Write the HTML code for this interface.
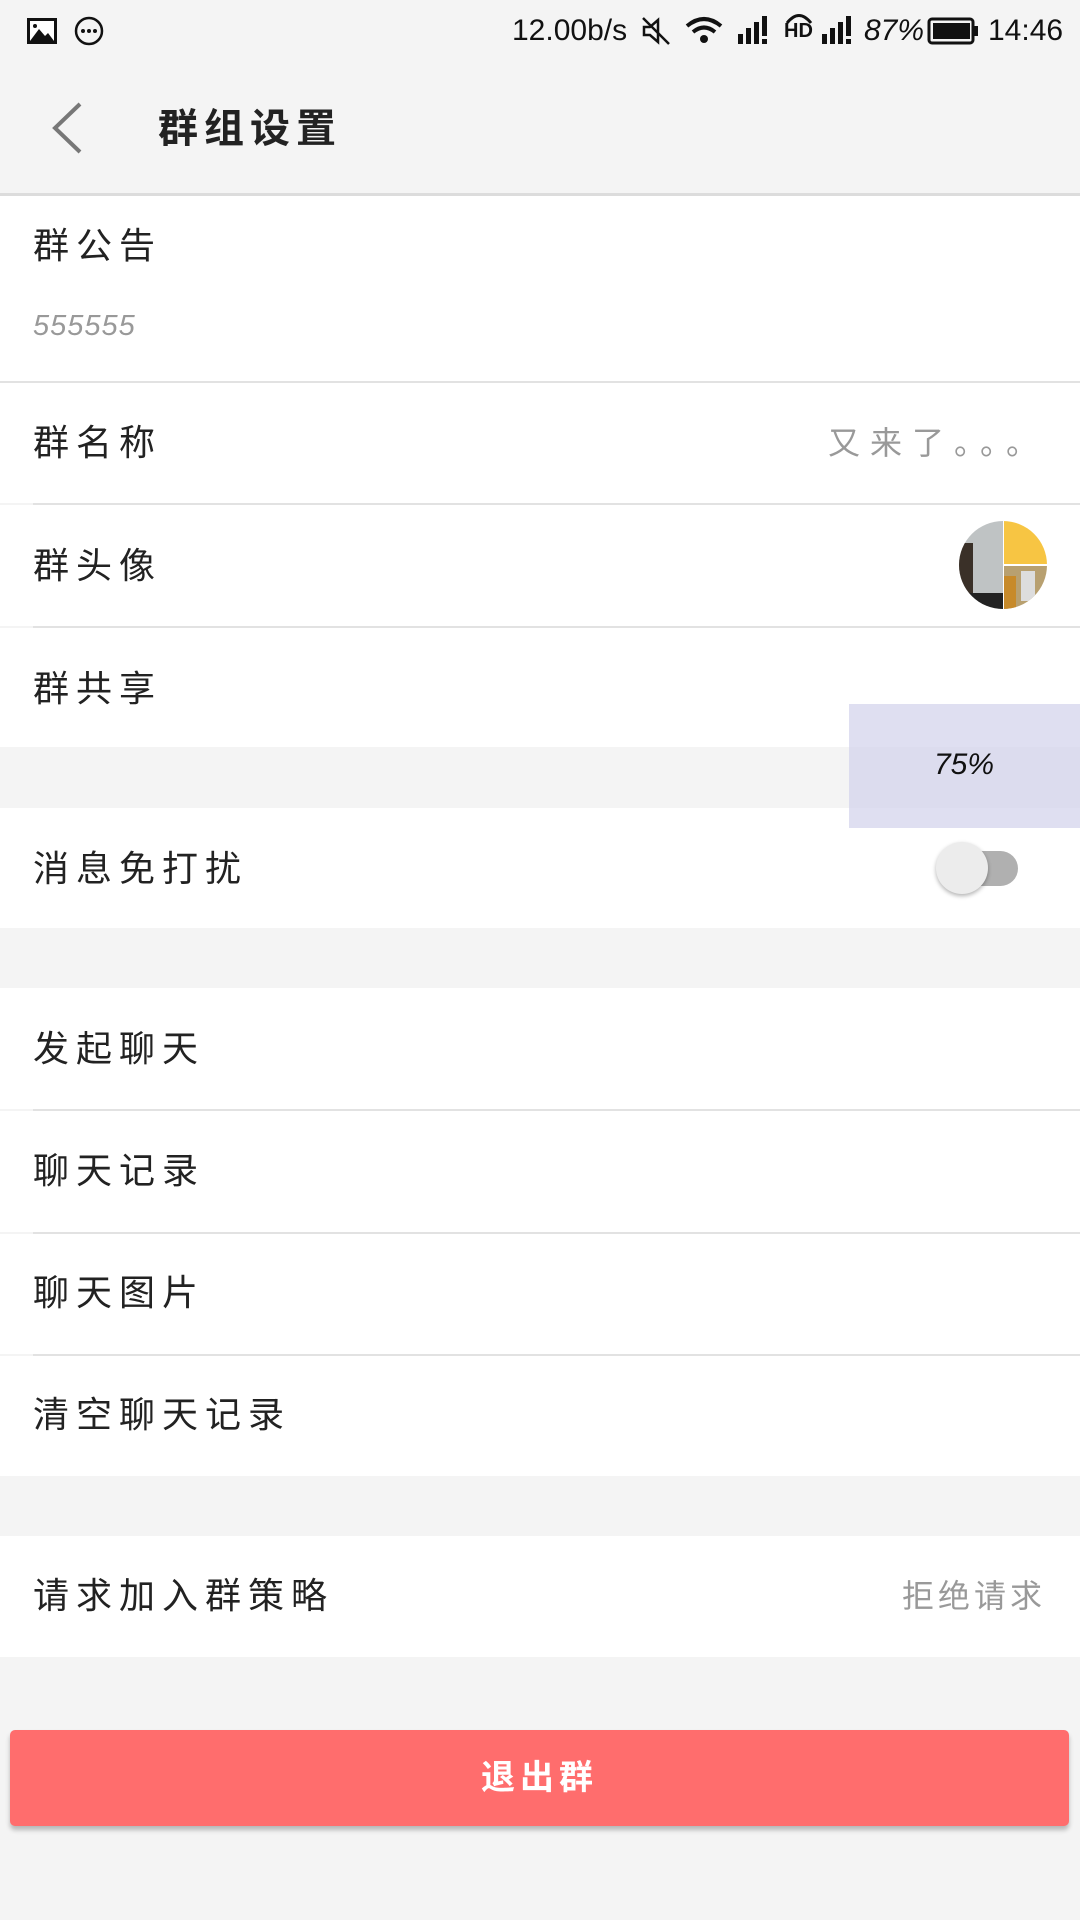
<!DOCTYPE html>
<html><head><meta charset="utf-8"><style>
*{margin:0;padding:0;box-sizing:border-box}
body{width:1080px;height:1920px;background:#f4f4f4;position:relative;overflow:hidden;font-family:"Liberation Sans","Noto Sans CJK SC",sans-serif;color:#222}
.a{position:absolute}
.row{position:absolute;left:0;width:1080px;background:#fff}
.t{position:absolute;left:33px;font-size:36px;letter-spacing:7px;line-height:40px}
.line{position:absolute;left:33px;right:0;height:2px;background:#e2e2e2}
.g{color:#999}
</style></head><body>
<div class="a" style="left:0;top:0;width:1080px;height:61px;background:#f4f4f4"></div>
<svg class="a" style="left:26px;top:17px" width="32" height="28" viewBox="0 0 32 28"><rect x="1" y="1" width="30" height="26" fill="#111"/><rect x="4" y="4" width="24" height="20" fill="#fff"/><path d="M4 24 L13 12 L19 19 L22 16 L28 24Z" fill="#111"/><circle cx="9" cy="9" r="2" fill="#111"/></svg>
<svg class="a" style="left:74px;top:16px" width="30" height="30"><circle cx="15" cy="15" r="13" fill="none" stroke="#111" stroke-width="2.5"/><circle cx="9" cy="15" r="2" fill="#111"/><circle cx="15" cy="15" r="2" fill="#111"/><circle cx="21" cy="15" r="2" fill="#111"/></svg>
<div class="a" style="left:512px;top:13px;font-size:30px;color:#111;line-height:36px">12.00b/s</div>
<svg class="a" style="left:640px;top:15px" width="32" height="32"><path d="M4 12h6l8-7v22l-8-7H4z" fill="none" stroke="#111" stroke-width="2.5"/><path d="M3 3 L29 29" stroke="#111" stroke-width="2.5"/></svg>
<svg class="a" style="left:684px;top:15px" width="40" height="32"><path d="M3 11 Q20 -3 37 11" fill="none" stroke="#111" stroke-width="4"/><path d="M9 17 Q20 8 31 17" fill="none" stroke="#111" stroke-width="4"/><circle cx="20" cy="24" r="4" fill="#111"/></svg>
<svg class="a" style="left:738px;top:16px" width="32" height="30"><rect x="0" y="18" width="5" height="10" fill="#111"/><rect x="8" y="12" width="5" height="16" fill="#111"/><rect x="16" y="6" width="5" height="22" fill="#111"/><rect x="24" y="0" width="5" height="20" fill="#111"/><rect x="24" y="23" width="5" height="5" fill="#111"/></svg>
<div class="a" style="left:784px;top:20px;font-size:20px;font-weight:bold;color:#111">HD</div>
<svg class="a" style="left:784px;top:12px" width="30" height="12"><path d="M3 11 Q15 -4 27 11" fill="none" stroke="#111" stroke-width="3"/></svg>
<svg class="a" style="left:822px;top:16px" width="32" height="30"><rect x="0" y="18" width="5" height="10" fill="#111"/><rect x="8" y="12" width="5" height="16" fill="#111"/><rect x="16" y="6" width="5" height="22" fill="#111"/><rect x="24" y="0" width="5" height="20" fill="#111"/><rect x="24" y="23" width="5" height="5" fill="#111"/></svg>
<div class="a" style="left:864px;top:13px;font-size:30px;color:#111;line-height:36px;font-style:italic">87%</div>
<svg class="a" style="left:927px;top:17px" width="52" height="28"><rect x="2" y="2" width="44" height="24" rx="3" fill="none" stroke="#111" stroke-width="3"/><rect x="6" y="6" width="37" height="16" fill="#111"/><rect x="47" y="9" width="4" height="10" fill="#111"/></svg>
<div class="a" style="left:988px;top:13px;font-size:30px;color:#111;line-height:36px">14:46</div>
<svg class="a" style="left:50px;top:102px" width="34" height="52"><path d="M30 2 L5 26 L30 50" fill="none" stroke="#777" stroke-width="4"/></svg>
<div class="a" style="left:158px;top:106px;font-size:40px;font-weight:bold;letter-spacing:6px;line-height:46px">群组设置</div>
<div class="a" style="left:0;top:193px;width:1080px;height:3px;background:#dcdcdc"></div>

<div class="row" style="top:196px;height:186px"><div class="t" style="top:30px">群公告</div><div class="a g" style="left:33px;top:114px;font-size:29px;font-style:italic;letter-spacing:1px">555555</div></div>
<div class="line" style="top:381px;left:0"></div>
<div class="row" style="top:383px;height:120px"><div class="t" style="top:40px">群名称</div><div class="a g" style="left:828px;top:35px;font-size:32px;letter-spacing:10px">又来了。。。</div></div>
<div class="line" style="top:503px"></div>
<div class="row" style="top:505px;height:121px"><div class="t" style="top:41px">群头像</div>
<svg class="a" style="left:959px;top:16px" width="88" height="88"><defs><clipPath id="c"><circle cx="44" cy="44" r="44"/></clipPath></defs><g clip-path="url(#c)"><rect width="44" height="88" fill="#bfc3c4"/><rect x="0" y="22" width="14" height="50" fill="#3a3028"/><rect x="0" y="72" width="44" height="16" fill="#222"/><rect x="45" width="43" height="43" fill="#f7c543"/><rect x="45" y="45" width="43" height="43" fill="#b8a070"/><rect x="45" y="55" width="12" height="33" fill="#c78a2a"/><rect x="62" y="50" width="14" height="30" fill="#ddd"/></g></svg></div>
<div class="line" style="top:626px"></div>
<div class="row" style="top:628px;height:119px"><div class="t" style="top:41px">群共享</div></div>

<div class="row" style="top:808px;height:120px"><div class="t" style="top:41px">消息免打扰</div>
<div class="a" style="left:940px;top:43px;width:78px;height:35px;border-radius:18px;background:#b0b0b0"></div>
<div class="a" style="left:936px;top:34px;width:52px;height:52px;border-radius:50%;background:#ececec;box-shadow:0 2px 4px rgba(0,0,0,.3)"></div></div>

<div class="row" style="top:988px;height:121px"><div class="t" style="top:41px">发起聊天</div></div>
<div class="line" style="top:1109px"></div>
<div class="row" style="top:1111px;height:121px"><div class="t" style="top:40px">聊天记录</div></div>
<div class="line" style="top:1232px"></div>
<div class="row" style="top:1234px;height:120px"><div class="t" style="top:39px">聊天图片</div></div>
<div class="line" style="top:1354px"></div>
<div class="row" style="top:1356px;height:120px"><div class="t" style="top:39px">清空聊天记录</div></div>

<div class="row" style="top:1536px;height:121px"><div class="t" style="top:40px">请求加入群策略</div><div class="a g" style="left:902px;top:35px;font-size:32px;letter-spacing:4px">拒绝请求</div></div>

<div class="a" style="left:849px;top:704px;width:231px;height:124px;background:rgba(212,212,236,.75)"></div>
<div class="a" style="left:934px;top:748px;font-size:30px;font-style:italic;color:#111">75%</div>

<div class="a" style="left:10px;top:1730px;width:1059px;height:96px;border-radius:5px;background:#ff6d6d;box-shadow:0 4px 5px rgba(0,0,0,.25);color:#fff;font-size:34px;font-weight:bold;text-align:center;line-height:96px;letter-spacing:5px">退出群</div>
</body></html>
